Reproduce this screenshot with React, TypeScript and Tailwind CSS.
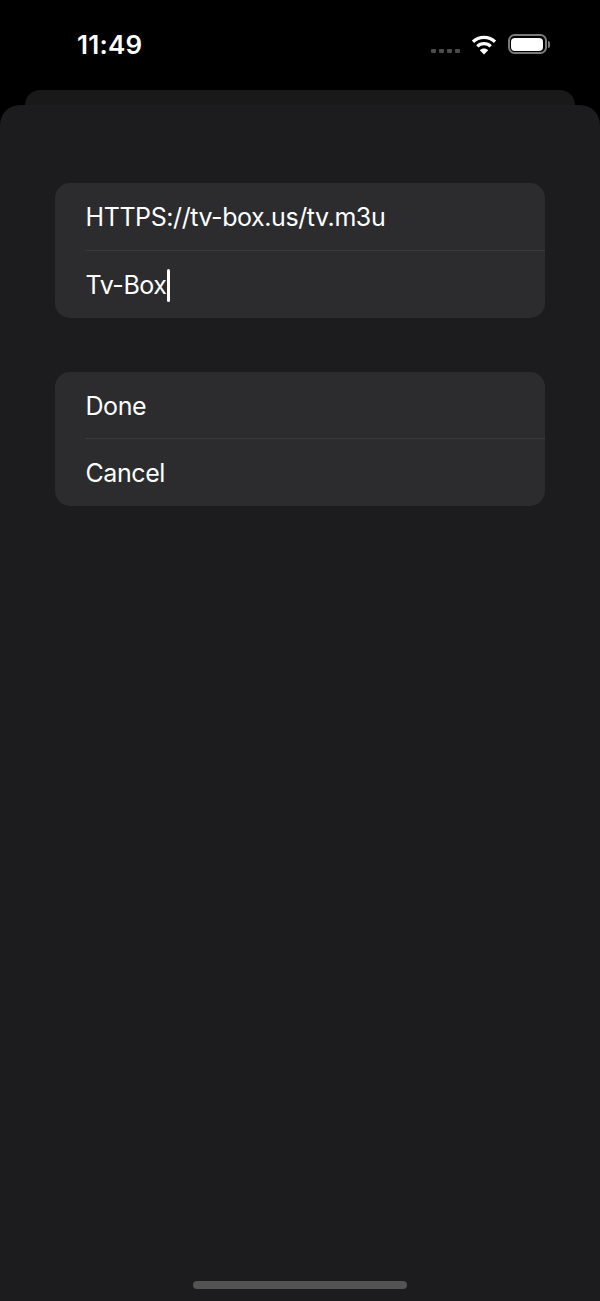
export default function App() {
  const font = { fontFamily: "Inter, 'Liberation Sans', sans-serif" };
  return (
    <div style={font} className="w-[600px] h-[1301px] bg-black flex flex-col overflow-hidden text-white">
      <div className="h-[90px] flex items-start justify-between shrink-0">
        <div className="ml-[77px] mt-[30px] text-[26px] leading-[30px] font-semibold tracking-[0.2px]">11:49</div>
        <div className="mt-[34px] mr-[50px] flex items-start">
          <div className="flex gap-[3px] mr-[11px] mt-[15px]">
            <span className="w-[5px] h-[4px] rounded-[1px] bg-[#4a4a4a]" />
            <span className="w-[5px] h-[4px] rounded-[1px] bg-[#4a4a4a]" />
            <span className="w-[5px] h-[4px] rounded-[1px] bg-[#4a4a4a]" />
            <span className="w-[5px] h-[4px] rounded-[1px] bg-[#4a4a4a]" />
          </div>
          <svg width="26" height="20" viewBox="0 0 26 20" className="mr-[11px] mt-[1px]">
            <path d="M2 6.800C8 .9 18 .9 24 6.800" fill="none" stroke="#fff" strokeWidth="3.300" />
            <path d="M6.300 11.300C10 7.600 16 7.600 19.700 11.300" fill="none" stroke="#fff" strokeWidth="3.300" />
            <path d="M8.800 15.300C11.200 13 14.800 13 17.200 15.300L13 19.500z" fill="#fff" />
          </svg>
          <div className="flex items-center">
            <div className="w-[39px] h-[20px] rounded-[6.500px] border-2 border-[#7a7a7a] p-[1.500px]">
              <div className="w-full h-full rounded-[4px] bg-white" />
            </div>
            <div className="w-[2.500px] h-[7px] rounded-r-[3px] bg-[#7a7a7a] ml-[1px]" />
          </div>
        </div>
      </div>
      <div className="h-[15px] mx-[25px] shrink-0 bg-[#191919] rounded-t-[16px]" />
      <div className="flex-1 bg-[#1c1c1e] rounded-t-[20px] flex flex-col px-[55px] pt-[78px]">
        <div className="bg-[#2c2c2e] rounded-[15px] pl-[30px] text-[25px] tracking-[-0.42px]">
          <div className="h-[68px] pt-[3px] flex items-center border-b border-[#3a3a3c]">
            <span className="ml-[0.500px]">HTTPS://tv-box.us/tv.m3u</span>
          </div>
          <div className="h-[67px] pt-[2px] flex items-center">
            <span className="ml-[0.500px]">Tv-Box</span>
            <span className="w-[3px] h-[33px] bg-white rounded-full" />
          </div>
        </div>
        <div className="bg-[#2c2c2e] rounded-[15px] pl-[30px] mt-[54px] text-[25px] tracking-[-0.42px]">
          <div className="h-[67px] pt-[3px] flex items-center border-b border-[#3a3a3c]">
            <span className="ml-[0.500px]">Done</span>
          </div>
          <div className="h-[67px] pt-[3px] flex items-center">
            <span className="ml-[0.500px]">Cancel</span>
          </div>
        </div>
        <div className="mt-auto mb-[12px] self-center w-[214px] h-[8px] rounded-full bg-[#535353]" />
      </div>
    </div>
  );
}
